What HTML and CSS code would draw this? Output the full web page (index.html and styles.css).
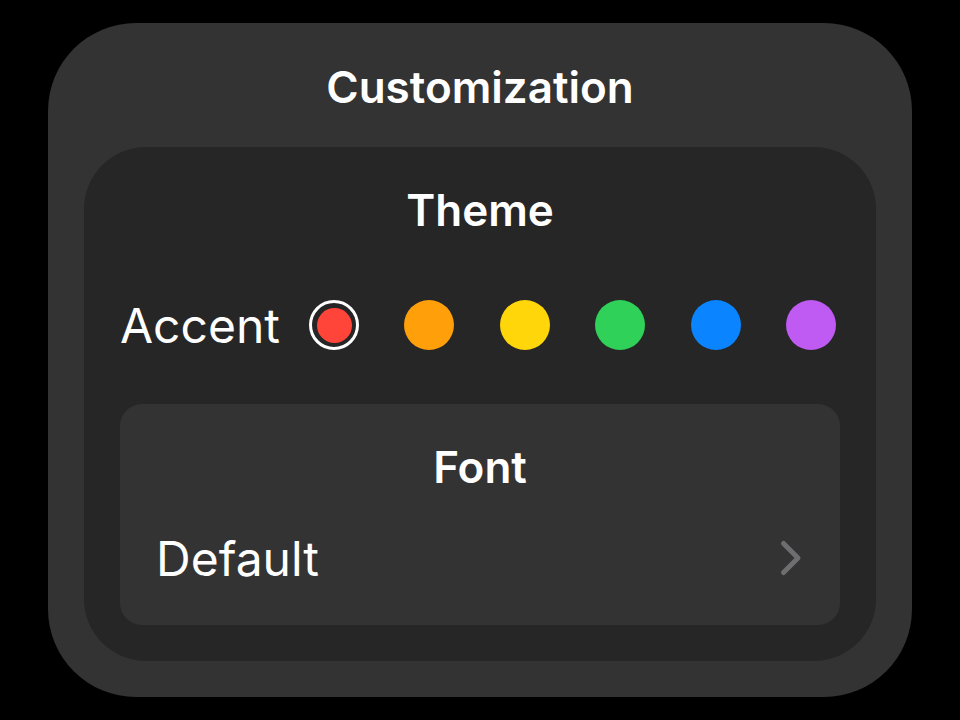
FILE: index.html
```html
<!DOCTYPE html>
<html lang="en">
<head>
    <meta charset="UTF-8">
    <meta name="viewport" content="width=device-width, initial-scale=1.0">
    <title>Customization</title>
    <link rel="stylesheet" href="styles.css">
</head>
<body>

    <div class="panel">
        <h1 class="panel-title">Customization</h1>

        <div class="section">
            <h2 class="section-title">Theme</h2>

            <div class="accent-row">
                <span class="row-label">Accent</span>
                <div class="swatches">
                    <span class="swatch selected"><span class="dot red"></span></span>
                    <span class="swatch"><span class="dot orange"></span></span>
                    <span class="swatch"><span class="dot yellow"></span></span>
                    <span class="swatch"><span class="dot green"></span></span>
                    <span class="swatch"><span class="dot blue"></span></span>
                    <span class="swatch"><span class="dot purple"></span></span>
                </div>
            </div>

            <div class="font-card">
                <h2 class="section-title">Font</h2>
                <div class="font-row">
                    <span class="row-label">Default</span>
                    <svg class="chevron" width="24" height="38" viewBox="0 0 24 38">
                        <polyline points="4.5,4.5 19,19 4.5,33.5" fill="none" stroke="#6e6e70" stroke-width="5" stroke-linecap="round" stroke-linejoin="round"/>
                    </svg>
                </div>
            </div>
        </div>
    </div>

</body>
</html>
```

FILE: styles.css
```css
/* Reset CSS */
* {
    margin: 0;
    padding: 0;
    box-sizing: border-box;
}

body {
    font-family: Inter, "Noto Sans", sans-serif;
    background-color: #000;
    color: #fff;
    padding: 23px 48px;
}

.panel {
    width: 864px;
    height: 674px;
    background-color: #333333;
    border-radius: 88px;
    padding: 0 36px 36px;
}

.panel-title {
    height: 124px;
    padding-top: 4px;
    display: flex;
    justify-content: center;
    align-items: center;
    font-size: 44px;
    font-weight: 600;
}

.section {
    height: 514px;
    background-color: #262626;
    border-radius: 62px;
    padding: 0 36px 36px;
}

.section-title {
    height: 126px;
    display: flex;
    justify-content: center;
    align-items: center;
    font-size: 44px;
    font-weight: 600;
}

.accent-row {
    height: 104px;
    margin: 0 -36px 27px;
    padding: 0 40px 0 36px;
    display: flex;
    align-items: center;
}

.row-label {
    font-size: 48px;
    font-weight: 400;
}

.swatches {
    margin-left: auto;
    display: flex;
    gap: 45.4px;
}

.swatch {
    width: 50px;
    height: 50px;
    border-radius: 50%;
    display: flex;
    justify-content: center;
    align-items: center;
}

.swatch.selected {
    border: 3.5px solid #fff;
}

.dot {
    width: 50px;
    height: 50px;
    border-radius: 50%;
}

.selected .dot {
    width: 35px;
    height: 35px;
}

.red { background-color: #ff453a; }
.orange { background-color: #ff9f0a; }
.yellow { background-color: #ffd60a; }
.green { background-color: #30d158; }
.blue { background-color: #0a84ff; }
.purple { background-color: #bf5af2; }

.font-card {
    height: 221px;
    background-color: #333333;
    border-radius: 22px;
}

.font-row {
    height: 56px;
    padding: 0 37px 0 36px;
    display: flex;
    align-items: center;
    justify-content: space-between;
}
```
